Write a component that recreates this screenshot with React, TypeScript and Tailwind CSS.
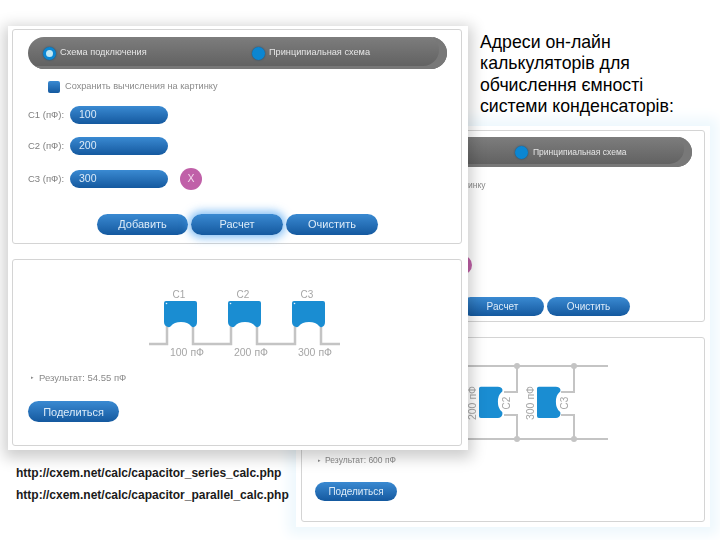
const sans = "font-['Liberation_Sans',sans-serif] blur-[0.35px]";

const CAP =
  'M2 0H31a2 2 0 0 1 2 2V21q0 4-3 5q-2 .5-3-1q-3-4-10-4t-10 4q-1 1.500-3 1q-4-1-4-5V2a2 2 0 0 1 2-2z';

const Pill = ({ label, className }: { label: string; className: string }) => (
  <div
    className={`flex items-center justify-center rounded-full bg-linear-to-b from-[#3a8ad2] to-[#14599f] text-[#dcebf8] ${className}`}
  >
    {label}
  </div>
);

const Radio = ({ active }: { active?: boolean }) => (
  <span className="flex h-[13px] w-[13px] shrink-0 items-center justify-center rounded-full bg-[#0b86d2] shadow-[0_0_2px_#0c4a78]">
    {active && <span className="h-[7px] w-[7px] rounded-full bg-[#bfe9f6]" />}
  </span>
);

const ValueRow = ({ name, value }: { name: string; value: string }) => (
  <div className="flex items-center gap-[6px]">
    <span className="w-[36px] whitespace-nowrap text-[9.500px] text-[#7f7f7f]">{name} (пФ):</span>
    <div className="flex h-[18px] w-[98px] items-center rounded-full bg-linear-to-b from-[#3a8ad2] to-[#14599f] pl-[9px] text-[10.500px] text-[#dcebf8]">
      {value}
    </div>
  </div>
);

const SeriesCircuit = () => (
  <svg width="200" height="72" viewBox="0 0 200 72" className="ml-[132px] block">
    <path
      d="M4 59H22V30M48 30V59H86V30M112 30V59H150V30M176 30V59H195"
      fill="none"
      stroke="#c4c4c4"
      strokeWidth="2.500"
    />
    {[19, 83, 147].map((x, i) => (
      <g key={x} transform={`translate(${x} 16)`}>
        <path d={CAP} fill="#1a8dd2" />
        <circle cx="2.500" cy="2.500" r=".8" fill="#e6f5ff" />
        <text x="15" y="-3" textAnchor="middle" fontSize="10" fill="#a6a6a6" fontFamily="Liberation Sans">
          C{i + 1}
        </text>
        <text x="23" y="55" textAnchor="middle" fontSize="10.500" fill="#a6a6a6" fontFamily="Liberation Sans">
          {(i + 1) * 100} пФ
        </text>
      </g>
    ))}
  </svg>
);

const ParallelCircuit = () => (
  <svg width="150" height="90" viewBox="0 0 150 90" className="block">
    <g fill="none" stroke="#c4c4c4" strokeWidth="2">
      <path d="M0 9H148M0 82H148" />
      <path d="M44 35H57V9M44 58H57V82M101 35H114V9M101 58H114V82" />
    </g>
    {[57, 114].map((x) => (
      <g key={x} fill="#c4c4c4">
        <circle cx={x} cy="9" r="3" />
        <circle cx={x} cy="82" r="3" />
      </g>
    ))}
    {[19, 77].map((x, i) => (
      <g key={x}>
        <g transform={`translate(${x} 61) scale(.9 .95) rotate(-90)`}>
          <path d={CAP} fill="#1a8dd2" />
        </g>
        <text
          transform={`translate(${x + 31} 46) rotate(-90)`}
          textAnchor="middle"
          fontSize="10"
          fill="#a6a6a6"
          fontFamily="Liberation Sans"
        >
          C{i + 2}
        </text>
        <text
          transform={`translate(${x - 3} 46) rotate(-90)`}
          textAnchor="middle"
          fontSize="10.500"
          fill="#a6a6a6"
          fontFamily="Liberation Sans"
        >
          {(i + 2) * 100} пФ
        </text>
      </g>
    ))}
  </svg>
);

const BackWindow = () => (
  <div
    className={`absolute left-[296px] top-[126px] flex h-[401px] w-[414px] flex-col gap-[15px] bg-white p-[5px] pt-[4px] shadow-[0_0_12px_8px_#eef8fd] ${sans}`}
  >
    {/* upper panel, its left part is under the front window */}
    <div className="flex h-[192px] flex-col rounded-[3px] border border-[#d4d4d4] pl-[8px] pr-[12px] pt-[6px]">
      <div className="flex h-[30px] items-center gap-[5px] rounded-full bg-linear-to-b from-[#7d7d7d] to-[#5f5f5f] pl-[205px] text-[8.500px] text-[#e6e6e6] shadow-[inset_-8px_-3px_0_#787878]">
        <Radio />
        <span>Принципиальная схема</span>
      </div>
      <p className="mt-[12px] pl-[141px] text-[8.500px] text-[#8a8a8a]">картинку</p>
      <div className="ml-[142px] mt-[63px] h-[20px] w-[20px] rounded-full bg-[#c060a8]" />
      <div className="ml-[151px] mt-[22px] flex gap-[3px] text-[10px]">
        <Pill label="Расчет" className="h-[19px] w-[83px]" />
        <Pill label="Очистить" className="h-[19px] w-[83px]" />
      </div>
    </div>
    {/* lower panel */}
    <div className="flex h-[185px] flex-col rounded-[3px] border border-[#d4d4d4] pt-[19px]">
      <div className="ml-[158px]">
        <ParallelCircuit />
      </div>
      <div className="ml-[16px] mt-[7px] flex items-center gap-[4px] text-[8.500px] text-[#8a8a8a]">
        <span className="text-[5px]">▸</span>
        <span>Результат: 600 пФ</span>
      </div>
      <Pill label="Поделиться" className="ml-[13px] mt-[15px] h-[19px] w-[82px] text-[10px]" />
    </div>
  </div>
);

const FrontWindow = () => (
  <div
    className={`absolute left-[8px] top-[26px] flex h-[424px] w-[460px] flex-col gap-[15px] bg-white pb-[4px] pl-[4px] pr-[6px] pt-[3px] shadow-[0_4px_14px_4px_rgba(0,0,0,.2)] ${sans}`}
  >
    <div className="flex h-[215px] flex-col rounded-[3px] border border-[#d4d4d4] pl-[15px] pr-[14px] pt-[7px]">
      <div className="flex h-[32px] items-center rounded-full bg-linear-to-b from-[#7d7d7d] to-[#5f5f5f] pl-[15px] text-[9.200px] text-[#e6e6e6] shadow-[inset_-8px_-3px_0_#787878]">
        <Radio active />
        <span className="ml-[4px] w-[192px]">Схема подключения</span>
        <Radio />
        <span className="ml-[4px]">Принципиальная схема</span>
      </div>
      <div className="ml-[20px] mt-[11px] flex items-center gap-[5px] text-[9.200px] text-[#8a8a8a]">
        <span className="h-[12px] w-[12px] rounded-[2px] bg-linear-to-b from-[#3a8ad2] to-[#14599f]" />
        <span>Сохранить вычисления на картинку</span>
      </div>
      <div className="mt-[12px] flex flex-col gap-[13px]">
        <ValueRow name="C1" value="100" />
        <ValueRow name="C2" value="200" />
        <div className="flex items-center">
          <ValueRow name="C3" value="300" />
          <div className="ml-[12px] flex h-[22px] w-[22px] items-center justify-center rounded-full bg-[#c060a8] text-[10.500px] text-[#f3d9ec]">
            X
          </div>
        </div>
      </div>
      <div className="ml-[69px] mt-[24px] flex gap-[3px] text-[11px]">
        <Pill label="Добавить" className="h-[21px] w-[91px]" />
        <Pill
          label="Расчет"
          className="h-[21px] w-[92px] shadow-[0_0_8px_3px_rgba(70,160,240,.65)]"
        />
        <Pill label="Очистить" className="h-[21px] w-[92px]" />
      </div>
    </div>
    <div className="flex h-[187px] flex-col rounded-[3px] border border-[#d4d4d4] pt-[25px]">
      <SeriesCircuit />
      <div className="ml-[18px] mt-[14px] flex items-center gap-[5px] text-[9.500px] text-[#8a8a8a]">
        <span className="text-[5px]">▸</span>
        <span>Результат: 54.55 пФ</span>
      </div>
      <Pill label="Поделиться" className="ml-[15px] mt-[16px] h-[21px] w-[91px] text-[11px]" />
    </div>
  </div>
);

export default function App() {
  return (
    <div className="relative h-[540px] w-[720px] overflow-hidden bg-white font-['Liberation_Sans',sans-serif]">
      <BackWindow />
      <FrontWindow />

      <p className="absolute left-[480px] top-[32px] whitespace-nowrap text-[17.700px] leading-[21.300px] text-black">
        Адреси он-лайн
        <br />
        калькуляторів для
        <br />
        обчислення ємності
        <br />
        системи конденсаторів:
      </p>

      <div className="absolute left-[16px] top-[465px] flex flex-col gap-[6px] text-[12px] font-bold leading-[16px] text-[#1a1a1a]">
        <span>http://cxem.net/calc/capacitor_series_calc.php</span>
        <span>http://cxem.net/calc/capacitor_parallel_calc.php</span>
      </div>
    </div>
  );
}
